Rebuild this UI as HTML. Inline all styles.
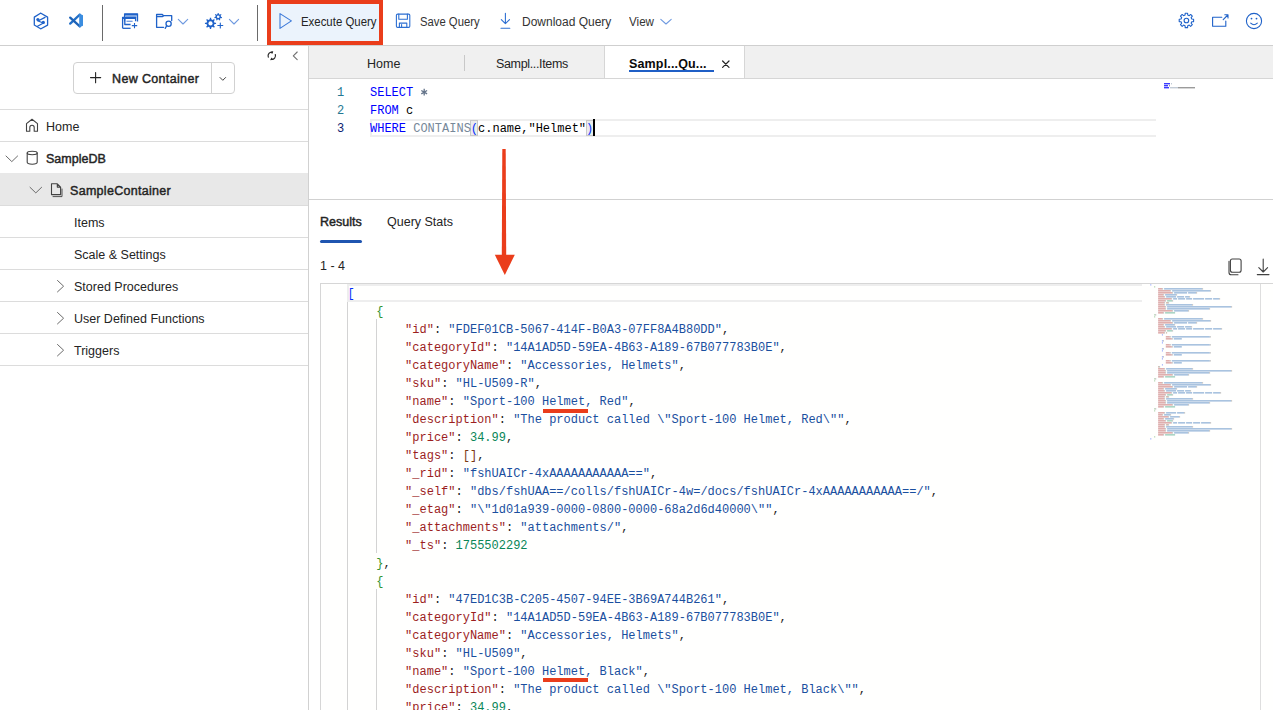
<!DOCTYPE html>
<html><head><meta charset="utf-8">
<style>
*{box-sizing:border-box}
html,body{margin:0;padding:0}
body{width:1273px;height:710px;overflow:hidden;position:relative;background:#fff;font-family:"Liberation Sans",sans-serif;color:#242424}
.a{position:absolute;white-space:pre}
.t{font-size:12.5px;line-height:16px}
.mono{font-family:"Liberation Mono",monospace;font-size:12px;line-height:18px}
svg{position:absolute;overflow:visible}
.hl{position:absolute;background:#e4e4e4}
.k{color:#9c1e1e}.s{color:#1a4f9f}.n{color:#098658}.p{color:#000}
.b1{color:#0431fa}.b2{color:#319331}.b3{color:#7b3814}
.kw{color:#0000ff}
.sb{-webkit-text-stroke:0.45px currentColor}
</style></head><body>

<!-- ============ TOP TOOLBAR ============ -->
<div class="a" style="left:0;top:45px;width:1273px;height:1px;background:#cfcfcf"></div>
<div class="a" style="left:102px;top:5px;width:1px;height:36px;background:#6a6a6a"></div>
<div class="a" style="left:257px;top:5px;width:1px;height:36px;background:#6a6a6a"></div>

<!-- Execute query highlighted -->
<div class="a" style="left:267px;top:0;width:116px;height:45px;background:#ea3d1b"></div>
<div class="a" style="left:271px;top:4px;width:108px;height:37px;background:#ebf3fc"></div>

<div id="toolbar-text">
<div class="a t" style="left:301px;top:14px;transform:scaleX(0.913);transform-origin:0 0;color:#242424">Execute Query</div>
<div class="a t" style="left:420px;top:14px;transform:scaleX(0.903);transform-origin:0 0;color:#333">Save Query</div>
<div class="a t" style="left:522px;top:14px;transform:scaleX(0.959);transform-origin:0 0;color:#333">Download Query</div>
<div class="a t" style="left:629px;top:14px;transform:scaleX(0.93);transform-origin:0 0;color:#333">View</div>
</div>

<!-- ============ SIDEBAR ============ -->
<div class="a" style="left:308px;top:46px;width:1px;height:664px;background:#d1d1d1"></div>

<!-- New container button -->
<div class="a" style="left:73px;top:62px;width:162px;height:32px;border:1px solid #d1d1d1;border-radius:4px;background:#fff"></div>
<div class="a" style="left:211px;top:63px;width:1px;height:30px;background:#d1d1d1"></div>
<div class="a t sb" style="left:112px;top:71px;letter-spacing:0.35px;color:#242424">New Container</div>

<div class="a" style="left:0;top:109px;width:308px;height:1px;background:#dcdcdc"></div>
<div class="a" style="left:0;top:141px;width:308px;height:1px;background:#dcdcdc"></div>
<div class="a" style="left:0;top:173px;width:308px;height:32px;background:#e8e8e8"></div>
<div class="a" style="left:0;top:205px;width:308px;height:1px;background:#dcdcdc"></div>
<div class="a" style="left:0;top:237px;width:308px;height:1px;background:#dcdcdc"></div>
<div class="a" style="left:0;top:269px;width:308px;height:1px;background:#dcdcdc"></div>
<div class="a" style="left:0;top:301px;width:308px;height:1px;background:#dcdcdc"></div>
<div class="a" style="left:0;top:333px;width:308px;height:1px;background:#dcdcdc"></div>
<div class="a" style="left:0;top:365px;width:308px;height:1px;background:#dcdcdc"></div>

<div class="a t" style="left:46px;top:119px">Home</div>
<div class="a t sb" style="left:46px;top:151px">SampleDB</div>
<div class="a t sb" style="left:70px;top:183px;letter-spacing:0.3px">SampleContainer</div>
<div class="a t" style="left:74px;top:215px">Items</div>
<div class="a t" style="left:74px;top:247px">Scale &amp; Settings</div>
<div class="a t" style="left:74px;top:279px">Stored Procedures</div>
<div class="a t" style="left:74px;top:311px">User Defined Functions</div>
<div class="a t" style="left:74px;top:343px">Triggers</div>

<!-- ============ TABS ============ -->
<div class="a" style="left:309px;top:46px;width:964px;height:32px;background:#f0f0f0"></div>
<div class="a" style="left:309px;top:78px;width:964px;height:1px;background:#d6d6d6"></div>
<div class="a" style="left:464px;top:55px;width:1px;height:16px;background:#c8c8c8"></div>
<div class="a" style="left:604px;top:46px;width:141px;height:32px;background:#fff;border-left:1px solid #d6d6d6;border-right:1px solid #d6d6d6"></div>
<div class="a t" style="left:367px;top:56px">Home</div>
<div class="a t" style="left:496px;top:56px;letter-spacing:-0.35px">Sampl...Items</div>
<div class="a t" style="left:629px;top:56px;font-weight:bold;letter-spacing:0.15px;color:#0a0a0a">Sampl...Qu...</div>
<div class="a" style="left:629px;top:70px;width:85px;height:2px;background:#1f5fc6"></div>

<!-- ============ QUERY EDITOR ============ -->
<div class="a" style="left:370px;top:119px;width:786px;height:18px;border:2px solid #eeeeee;border-right:none"></div>
<div class="a" style="left:470px;top:120px;width:8px;height:16px;background:#ececec;border:1px solid #c8c8c8"></div>
<div class="a" style="left:586px;top:120px;width:8px;height:16px;background:#ececec;border:1px solid #c8c8c8"></div>
<div class="a mono" style="left:337px;top:84px;color:#237893">1</div>
<div class="a mono" style="left:337px;top:102px;color:#237893">2</div>
<div class="a mono" style="left:337px;top:120px;color:#0b216f">3</div>
<div class="a mono" style="left:370px;top:84px"><span class="kw">SELECT</span>  </div>
<div class="a mono" style="left:370px;top:102px"><span class="kw">FROM</span> <span class="p">c</span></div>
<div class="a mono" style="left:370px;top:120px"><span class="kw">WHERE</span> <span style="color:#778899">CONTAINS</span><span class="b1">(</span><span class="p">c.name,"Helmet"</span><span class="b1">)</span></div>
<div class="a" style="left:593px;top:119px;width:2px;height:17px;background:#000"></div>

<div class="a" style="left:309px;top:199px;width:964px;height:1px;background:#d1d1d1"></div>

<!-- ============ RESULTS ============ -->
<div class="a t sb" style="left:320px;top:214px">Results</div>
<div class="a t" style="left:387px;top:214px">Query Stats</div>
<div class="a" style="left:320px;top:240px;width:42px;height:3px;border-radius:2px;background:#1f55b0"></div>
<div class="a t" style="left:320px;top:258px">1 - 4</div>

<div class="a" style="left:320px;top:283px;width:960px;height:430px;border:1px solid #d6d6d6;background:#fffffe"></div>
<div class="a" style="left:1260px;top:284px;width:1px;height:426px;background:#dedede"></div>
<div class="a" style="left:347px;top:284px;width:795px;height:18px;border:2px solid #eeeeee;border-right:none"></div>

<div class="a" style="left:347px;top:302px;width:1px;height:410px;background:#d3d3d3"></div>
<div class="a" style="left:376px;top:319px;width:1px;height:234px;background:#d3d3d3"></div>
<div class="a" style="left:376px;top:589px;width:1px;height:122px;background:#d3d3d3"></div>
<div id="json" class="a mono" style="left:347.5px;top:285px"><span class="b1">[</span>
    <span class="b2">{</span>
        <span class="k">"id"</span>: <span class="s">"FDEF01CB-5067-414F-B0A3-07FF8A4B80DD"</span>,
        <span class="k">"categoryId"</span>: <span class="s">"14A1AD5D-59EA-4B63-A189-67B077783B0E"</span>,
        <span class="k">"categoryName"</span>: <span class="s">"Accessories, Helmets"</span>,
        <span class="k">"sku"</span>: <span class="s">"HL-U509-R"</span>,
        <span class="k">"name"</span>: <span class="s">"Sport-100 Helmet, Red"</span>,
        <span class="k">"description"</span>: <span class="s">"The product called \"Sport-100 Helmet, Red\""</span>,
        <span class="k">"price"</span>: <span class="n">34.99</span>,
        <span class="k">"tags"</span>: <span class="b3">[]</span>,
        <span class="k">"_rid"</span>: <span class="s">"fshUAICr-4xAAAAAAAAAAA=="</span>,
        <span class="k">"_self"</span>: <span class="s">"dbs/fshUAA==/colls/fshUAICr-4w=/docs/fshUAICr-4xAAAAAAAAAAA==/"</span>,
        <span class="k">"_etag"</span>: <span class="s">"\"1d01a939-0000-0800-0000-68a2d6d40000\""</span>,
        <span class="k">"_attachments"</span>: <span class="s">"attachments/"</span>,
        <span class="k">"_ts"</span>: <span class="n">1755502292</span>
    <span class="b2">}</span>,
    <span class="b2">{</span>
        <span class="k">"id"</span>: <span class="s">"47ED1C3B-C205-4507-94EE-3B69A744B261"</span>,
        <span class="k">"categoryId"</span>: <span class="s">"14A1AD5D-59EA-4B63-A189-67B077783B0E"</span>,
        <span class="k">"categoryName"</span>: <span class="s">"Accessories, Helmets"</span>,
        <span class="k">"sku"</span>: <span class="s">"HL-U509"</span>,
        <span class="k">"name"</span>: <span class="s">"Sport-100 Helmet, Black"</span>,
        <span class="k">"description"</span>: <span class="s">"The product called \"Sport-100 Helmet, Black\""</span>,
        <span class="k">"price"</span>: <span class="n">34.99</span>,
</div>

<!-- red underlines -->
<div class="a" style="left:543px;top:409px;width:45px;height:4px;background:#ea3d1b"></div>
<div class="a" style="left:543px;top:678px;width:45px;height:4px;background:#ea3d1b"></div>

<!-- red arrow -->
<svg style="left:0;top:0" width="1273" height="710"><polygon points="502.3,149 505.7,149 506.2,256 501.8,256" fill="#ea3d1b"/><polygon points="494.8,254.8 514.8,254.8 504.8,275" fill="#ea3d1b"/></svg>


<!--MINIMAP-->
<svg style="left:0;top:0" width="1273" height="710" opacity="0.42"><rect x="1150.3" y="284.2" width="1.0" height="1.3" fill="#0431fa"/><rect x="1154.2" y="286.2" width="1.0" height="1.3" fill="#319331"/><rect x="1158.1" y="288.2" width="4.0" height="1.3" fill="#a31515"/><rect x="1162.1" y="288.2" width="1.0" height="1.3" fill="#555"/><rect x="1164.1" y="288.2" width="38.0" height="1.3" fill="#0451a5"/><rect x="1202.1" y="288.2" width="1.0" height="1.3" fill="#555"/><rect x="1158.1" y="290.2" width="12.0" height="1.3" fill="#a31515"/><rect x="1170.1" y="290.2" width="1.0" height="1.3" fill="#555"/><rect x="1172.1" y="290.2" width="38.0" height="1.3" fill="#0451a5"/><rect x="1210.1" y="290.2" width="1.0" height="1.3" fill="#555"/><rect x="1158.1" y="292.2" width="14.0" height="1.3" fill="#a31515"/><rect x="1172.1" y="292.2" width="1.0" height="1.3" fill="#555"/><rect x="1174.1" y="292.2" width="13.0" height="1.3" fill="#0451a5"/><rect x="1188.1" y="292.2" width="8.0" height="1.3" fill="#0451a5"/><rect x="1196.1" y="292.2" width="1.0" height="1.3" fill="#555"/><rect x="1158.1" y="294.2" width="5.0" height="1.3" fill="#a31515"/><rect x="1163.1" y="294.2" width="1.0" height="1.3" fill="#555"/><rect x="1165.1" y="294.2" width="11.0" height="1.3" fill="#0451a5"/><rect x="1176.1" y="294.2" width="1.0" height="1.3" fill="#555"/><rect x="1158.1" y="296.2" width="6.0" height="1.3" fill="#a31515"/><rect x="1164.1" y="296.2" width="1.0" height="1.3" fill="#555"/><rect x="1166.1" y="296.2" width="10.0" height="1.3" fill="#0451a5"/><rect x="1177.1" y="296.2" width="7.0" height="1.3" fill="#0451a5"/><rect x="1185.1" y="296.2" width="4.0" height="1.3" fill="#0451a5"/><rect x="1189.1" y="296.2" width="1.0" height="1.3" fill="#555"/><rect x="1158.1" y="298.2" width="13.0" height="1.3" fill="#a31515"/><rect x="1171.1" y="298.2" width="1.0" height="1.3" fill="#555"/><rect x="1173.1" y="298.2" width="4.0" height="1.3" fill="#0451a5"/><rect x="1178.1" y="298.2" width="7.0" height="1.3" fill="#0451a5"/><rect x="1186.1" y="298.2" width="6.0" height="1.3" fill="#0451a5"/><rect x="1193.1" y="298.2" width="11.0" height="1.3" fill="#0451a5"/><rect x="1205.1" y="298.2" width="7.0" height="1.3" fill="#0451a5"/><rect x="1213.1" y="298.2" width="6.0" height="1.3" fill="#0451a5"/><rect x="1219.1" y="298.2" width="1.0" height="1.3" fill="#555"/><rect x="1158.1" y="300.2" width="7.0" height="1.3" fill="#a31515"/><rect x="1165.1" y="300.2" width="1.0" height="1.3" fill="#555"/><rect x="1167.1" y="300.2" width="5.0" height="1.3" fill="#098658"/><rect x="1172.1" y="300.2" width="1.0" height="1.3" fill="#555"/><rect x="1158.1" y="302.2" width="6.0" height="1.3" fill="#a31515"/><rect x="1164.1" y="302.2" width="1.0" height="1.3" fill="#555"/><rect x="1166.1" y="302.2" width="2.0" height="1.3" fill="#7b3814"/><rect x="1168.1" y="302.2" width="1.0" height="1.3" fill="#555"/><rect x="1158.1" y="304.2" width="6.0" height="1.3" fill="#a31515"/><rect x="1164.1" y="304.2" width="1.0" height="1.3" fill="#555"/><rect x="1166.1" y="304.2" width="26.0" height="1.3" fill="#0451a5"/><rect x="1192.1" y="304.2" width="1.0" height="1.3" fill="#555"/><rect x="1158.1" y="306.2" width="7.0" height="1.3" fill="#a31515"/><rect x="1165.1" y="306.2" width="1.0" height="1.3" fill="#555"/><rect x="1167.1" y="306.2" width="64.0" height="1.3" fill="#0451a5"/><rect x="1231.1" y="306.2" width="1.0" height="1.3" fill="#555"/><rect x="1158.1" y="308.2" width="7.0" height="1.3" fill="#a31515"/><rect x="1165.1" y="308.2" width="1.0" height="1.3" fill="#555"/><rect x="1167.1" y="308.2" width="42.0" height="1.3" fill="#0451a5"/><rect x="1209.1" y="308.2" width="1.0" height="1.3" fill="#555"/><rect x="1158.1" y="310.2" width="14.0" height="1.3" fill="#a31515"/><rect x="1172.1" y="310.2" width="1.0" height="1.3" fill="#555"/><rect x="1174.1" y="310.2" width="14.0" height="1.3" fill="#0451a5"/><rect x="1188.1" y="310.2" width="1.0" height="1.3" fill="#555"/><rect x="1158.1" y="312.2" width="5.0" height="1.3" fill="#a31515"/><rect x="1163.1" y="312.2" width="1.0" height="1.3" fill="#555"/><rect x="1165.1" y="312.2" width="10.0" height="1.3" fill="#098658"/><rect x="1154.2" y="314.2" width="1.0" height="1.3" fill="#319331"/><rect x="1155.2" y="314.2" width="1.0" height="1.3" fill="#555"/><rect x="1154.2" y="316.2" width="1.0" height="1.3" fill="#319331"/><rect x="1158.1" y="318.2" width="4.0" height="1.3" fill="#a31515"/><rect x="1162.1" y="318.2" width="1.0" height="1.3" fill="#555"/><rect x="1164.1" y="318.2" width="38.0" height="1.3" fill="#0451a5"/><rect x="1202.1" y="318.2" width="1.0" height="1.3" fill="#555"/><rect x="1158.1" y="320.2" width="12.0" height="1.3" fill="#a31515"/><rect x="1170.1" y="320.2" width="1.0" height="1.3" fill="#555"/><rect x="1172.1" y="320.2" width="38.0" height="1.3" fill="#0451a5"/><rect x="1210.1" y="320.2" width="1.0" height="1.3" fill="#555"/><rect x="1158.1" y="322.2" width="14.0" height="1.3" fill="#a31515"/><rect x="1172.1" y="322.2" width="1.0" height="1.3" fill="#555"/><rect x="1174.1" y="322.2" width="13.0" height="1.3" fill="#0451a5"/><rect x="1188.1" y="322.2" width="8.0" height="1.3" fill="#0451a5"/><rect x="1196.1" y="322.2" width="1.0" height="1.3" fill="#555"/><rect x="1158.1" y="324.2" width="5.0" height="1.3" fill="#a31515"/><rect x="1163.1" y="324.2" width="1.0" height="1.3" fill="#555"/><rect x="1165.1" y="324.2" width="9.0" height="1.3" fill="#0451a5"/><rect x="1174.1" y="324.2" width="1.0" height="1.3" fill="#555"/><rect x="1158.1" y="326.2" width="6.0" height="1.3" fill="#a31515"/><rect x="1164.1" y="326.2" width="1.0" height="1.3" fill="#555"/><rect x="1166.1" y="326.2" width="10.0" height="1.3" fill="#0451a5"/><rect x="1177.1" y="326.2" width="7.0" height="1.3" fill="#0451a5"/><rect x="1185.1" y="326.2" width="6.0" height="1.3" fill="#0451a5"/><rect x="1191.1" y="326.2" width="1.0" height="1.3" fill="#555"/><rect x="1158.1" y="328.2" width="13.0" height="1.3" fill="#a31515"/><rect x="1171.1" y="328.2" width="1.0" height="1.3" fill="#555"/><rect x="1173.1" y="328.2" width="4.0" height="1.3" fill="#0451a5"/><rect x="1178.1" y="328.2" width="7.0" height="1.3" fill="#0451a5"/><rect x="1186.1" y="328.2" width="6.0" height="1.3" fill="#0451a5"/><rect x="1193.1" y="328.2" width="11.0" height="1.3" fill="#0451a5"/><rect x="1205.1" y="328.2" width="7.0" height="1.3" fill="#0451a5"/><rect x="1213.1" y="328.2" width="8.0" height="1.3" fill="#0451a5"/><rect x="1221.1" y="328.2" width="1.0" height="1.3" fill="#555"/><rect x="1158.1" y="330.2" width="7.0" height="1.3" fill="#a31515"/><rect x="1165.1" y="330.2" width="1.0" height="1.3" fill="#555"/><rect x="1167.1" y="330.2" width="5.0" height="1.3" fill="#098658"/><rect x="1172.1" y="330.2" width="1.0" height="1.3" fill="#555"/><rect x="1158.1" y="332.2" width="6.0" height="1.3" fill="#a31515"/><rect x="1164.1" y="332.2" width="1.0" height="1.3" fill="#555"/><rect x="1166.1" y="332.2" width="1.0" height="1.3" fill="#7b3814"/><rect x="1161.9" y="334.2" width="1.0" height="1.3" fill="#0431fa"/><rect x="1165.8" y="336.2" width="4.0" height="1.3" fill="#a31515"/><rect x="1169.8" y="336.2" width="1.0" height="1.3" fill="#555"/><rect x="1171.8" y="336.2" width="38.0" height="1.3" fill="#0451a5"/><rect x="1209.8" y="336.2" width="1.0" height="1.3" fill="#555"/><rect x="1165.8" y="338.2" width="6.0" height="1.3" fill="#a31515"/><rect x="1171.8" y="338.2" width="1.0" height="1.3" fill="#555"/><rect x="1173.8" y="338.2" width="8.0" height="1.3" fill="#0451a5"/><rect x="1161.9" y="340.2" width="1.0" height="1.3" fill="#0431fa"/><rect x="1162.9" y="340.2" width="1.0" height="1.3" fill="#555"/><rect x="1161.9" y="342.2" width="1.0" height="1.3" fill="#0431fa"/><rect x="1165.8" y="344.2" width="4.0" height="1.3" fill="#a31515"/><rect x="1169.8" y="344.2" width="1.0" height="1.3" fill="#555"/><rect x="1171.8" y="344.2" width="38.0" height="1.3" fill="#0451a5"/><rect x="1209.8" y="344.2" width="1.0" height="1.3" fill="#555"/><rect x="1165.8" y="346.2" width="6.0" height="1.3" fill="#a31515"/><rect x="1171.8" y="346.2" width="1.0" height="1.3" fill="#555"/><rect x="1173.8" y="346.2" width="8.0" height="1.3" fill="#0451a5"/><rect x="1161.9" y="348.2" width="1.0" height="1.3" fill="#0431fa"/><rect x="1162.9" y="348.2" width="1.0" height="1.3" fill="#555"/><rect x="1161.9" y="350.2" width="1.0" height="1.3" fill="#0431fa"/><rect x="1165.8" y="352.2" width="4.0" height="1.3" fill="#a31515"/><rect x="1169.8" y="352.2" width="1.0" height="1.3" fill="#555"/><rect x="1171.8" y="352.2" width="38.0" height="1.3" fill="#0451a5"/><rect x="1209.8" y="352.2" width="1.0" height="1.3" fill="#555"/><rect x="1165.8" y="354.2" width="6.0" height="1.3" fill="#a31515"/><rect x="1171.8" y="354.2" width="1.0" height="1.3" fill="#555"/><rect x="1173.8" y="354.2" width="8.0" height="1.3" fill="#0451a5"/><rect x="1161.9" y="356.2" width="1.0" height="1.3" fill="#0431fa"/><rect x="1162.9" y="356.2" width="1.0" height="1.3" fill="#555"/><rect x="1161.9" y="358.2" width="1.0" height="1.3" fill="#0431fa"/><rect x="1165.8" y="360.2" width="4.0" height="1.3" fill="#a31515"/><rect x="1169.8" y="360.2" width="1.0" height="1.3" fill="#555"/><rect x="1171.8" y="360.2" width="38.0" height="1.3" fill="#0451a5"/><rect x="1209.8" y="360.2" width="1.0" height="1.3" fill="#555"/><rect x="1165.8" y="362.2" width="6.0" height="1.3" fill="#a31515"/><rect x="1171.8" y="362.2" width="1.0" height="1.3" fill="#555"/><rect x="1173.8" y="362.2" width="8.0" height="1.3" fill="#0451a5"/><rect x="1161.9" y="364.2" width="1.0" height="1.3" fill="#0431fa"/><rect x="1158.1" y="366.2" width="1.0" height="1.3" fill="#7b3814"/><rect x="1159.1" y="366.2" width="1.0" height="1.3" fill="#555"/><rect x="1158.1" y="368.2" width="6.0" height="1.3" fill="#a31515"/><rect x="1164.1" y="368.2" width="1.0" height="1.3" fill="#555"/><rect x="1166.1" y="368.2" width="26.0" height="1.3" fill="#0451a5"/><rect x="1192.1" y="368.2" width="1.0" height="1.3" fill="#555"/><rect x="1158.1" y="370.2" width="7.0" height="1.3" fill="#a31515"/><rect x="1165.1" y="370.2" width="1.0" height="1.3" fill="#555"/><rect x="1167.1" y="370.2" width="64.0" height="1.3" fill="#0451a5"/><rect x="1231.1" y="370.2" width="1.0" height="1.3" fill="#555"/><rect x="1158.1" y="372.2" width="7.0" height="1.3" fill="#a31515"/><rect x="1165.1" y="372.2" width="1.0" height="1.3" fill="#555"/><rect x="1167.1" y="372.2" width="42.0" height="1.3" fill="#0451a5"/><rect x="1209.1" y="372.2" width="1.0" height="1.3" fill="#555"/><rect x="1158.1" y="374.2" width="14.0" height="1.3" fill="#a31515"/><rect x="1172.1" y="374.2" width="1.0" height="1.3" fill="#555"/><rect x="1174.1" y="374.2" width="14.0" height="1.3" fill="#0451a5"/><rect x="1188.1" y="374.2" width="1.0" height="1.3" fill="#555"/><rect x="1158.1" y="376.2" width="5.0" height="1.3" fill="#a31515"/><rect x="1163.1" y="376.2" width="1.0" height="1.3" fill="#555"/><rect x="1165.1" y="376.2" width="10.0" height="1.3" fill="#098658"/><rect x="1154.2" y="378.2" width="1.0" height="1.3" fill="#319331"/><rect x="1155.2" y="378.2" width="1.0" height="1.3" fill="#555"/><rect x="1154.2" y="380.2" width="1.0" height="1.3" fill="#319331"/><rect x="1158.1" y="382.2" width="4.0" height="1.3" fill="#a31515"/><rect x="1162.1" y="382.2" width="1.0" height="1.3" fill="#555"/><rect x="1164.1" y="382.2" width="38.0" height="1.3" fill="#0451a5"/><rect x="1202.1" y="382.2" width="1.0" height="1.3" fill="#555"/><rect x="1158.1" y="384.2" width="12.0" height="1.3" fill="#a31515"/><rect x="1170.1" y="384.2" width="1.0" height="1.3" fill="#555"/><rect x="1172.1" y="384.2" width="38.0" height="1.3" fill="#0451a5"/><rect x="1210.1" y="384.2" width="1.0" height="1.3" fill="#555"/><rect x="1158.1" y="386.2" width="14.0" height="1.3" fill="#a31515"/><rect x="1172.1" y="386.2" width="1.0" height="1.3" fill="#555"/><rect x="1174.1" y="386.2" width="13.0" height="1.3" fill="#0451a5"/><rect x="1188.1" y="386.2" width="8.0" height="1.3" fill="#0451a5"/><rect x="1196.1" y="386.2" width="1.0" height="1.3" fill="#555"/><rect x="1158.1" y="388.2" width="5.0" height="1.3" fill="#a31515"/><rect x="1163.1" y="388.2" width="1.0" height="1.3" fill="#555"/><rect x="1165.1" y="388.2" width="11.0" height="1.3" fill="#0451a5"/><rect x="1176.1" y="388.2" width="1.0" height="1.3" fill="#555"/><rect x="1158.1" y="390.2" width="6.0" height="1.3" fill="#a31515"/><rect x="1164.1" y="390.2" width="1.0" height="1.3" fill="#555"/><rect x="1166.1" y="390.2" width="10.0" height="1.3" fill="#0451a5"/><rect x="1177.1" y="390.2" width="7.0" height="1.3" fill="#0451a5"/><rect x="1185.1" y="390.2" width="5.0" height="1.3" fill="#0451a5"/><rect x="1190.1" y="390.2" width="1.0" height="1.3" fill="#555"/><rect x="1158.1" y="392.2" width="13.0" height="1.3" fill="#a31515"/><rect x="1171.1" y="392.2" width="1.0" height="1.3" fill="#555"/><rect x="1173.1" y="392.2" width="4.0" height="1.3" fill="#0451a5"/><rect x="1178.1" y="392.2" width="7.0" height="1.3" fill="#0451a5"/><rect x="1186.1" y="392.2" width="6.0" height="1.3" fill="#0451a5"/><rect x="1193.1" y="392.2" width="11.0" height="1.3" fill="#0451a5"/><rect x="1205.1" y="392.2" width="7.0" height="1.3" fill="#0451a5"/><rect x="1213.1" y="392.2" width="7.0" height="1.3" fill="#0451a5"/><rect x="1220.1" y="392.2" width="1.0" height="1.3" fill="#555"/><rect x="1158.1" y="394.2" width="7.0" height="1.3" fill="#a31515"/><rect x="1165.1" y="394.2" width="1.0" height="1.3" fill="#555"/><rect x="1167.1" y="394.2" width="5.0" height="1.3" fill="#098658"/><rect x="1172.1" y="394.2" width="1.0" height="1.3" fill="#555"/><rect x="1158.1" y="396.2" width="6.0" height="1.3" fill="#a31515"/><rect x="1164.1" y="396.2" width="1.0" height="1.3" fill="#555"/><rect x="1166.1" y="396.2" width="2.0" height="1.3" fill="#7b3814"/><rect x="1168.1" y="396.2" width="1.0" height="1.3" fill="#555"/><rect x="1158.1" y="398.2" width="6.0" height="1.3" fill="#a31515"/><rect x="1164.1" y="398.2" width="1.0" height="1.3" fill="#555"/><rect x="1166.1" y="398.2" width="26.0" height="1.3" fill="#0451a5"/><rect x="1192.1" y="398.2" width="1.0" height="1.3" fill="#555"/><rect x="1158.1" y="400.2" width="7.0" height="1.3" fill="#a31515"/><rect x="1165.1" y="400.2" width="1.0" height="1.3" fill="#555"/><rect x="1167.1" y="400.2" width="64.0" height="1.3" fill="#0451a5"/><rect x="1231.1" y="400.2" width="1.0" height="1.3" fill="#555"/><rect x="1158.1" y="402.2" width="7.0" height="1.3" fill="#a31515"/><rect x="1165.1" y="402.2" width="1.0" height="1.3" fill="#555"/><rect x="1167.1" y="402.2" width="42.0" height="1.3" fill="#0451a5"/><rect x="1209.1" y="402.2" width="1.0" height="1.3" fill="#555"/><rect x="1158.1" y="404.2" width="14.0" height="1.3" fill="#a31515"/><rect x="1172.1" y="404.2" width="1.0" height="1.3" fill="#555"/><rect x="1174.1" y="404.2" width="14.0" height="1.3" fill="#0451a5"/><rect x="1188.1" y="404.2" width="1.0" height="1.3" fill="#555"/><rect x="1158.1" y="406.2" width="5.0" height="1.3" fill="#a31515"/><rect x="1163.1" y="406.2" width="1.0" height="1.3" fill="#555"/><rect x="1165.1" y="406.2" width="10.0" height="1.3" fill="#098658"/><rect x="1154.2" y="408.2" width="1.0" height="1.3" fill="#319331"/><rect x="1155.2" y="408.2" width="1.0" height="1.3" fill="#555"/><rect x="1154.2" y="410.2" width="1.0" height="1.3" fill="#319331"/><rect x="1158.1" y="412.2" width="6.0" height="1.3" fill="#a31515"/><rect x="1164.1" y="412.2" width="1.0" height="1.3" fill="#555"/><rect x="1166.1" y="412.2" width="10.0" height="1.3" fill="#0451a5"/><rect x="1177.1" y="412.2" width="7.0" height="1.3" fill="#0451a5"/><rect x="1184.1" y="412.2" width="1.0" height="1.3" fill="#555"/><rect x="1158.1" y="414.2" width="4.0" height="1.3" fill="#a31515"/><rect x="1162.1" y="414.2" width="1.0" height="1.3" fill="#555"/><rect x="1164.1" y="414.2" width="6.0" height="1.3" fill="#0451a5"/><rect x="1170.1" y="414.2" width="1.0" height="1.3" fill="#555"/><rect x="1158.1" y="416.2" width="10.0" height="1.3" fill="#a31515"/><rect x="1168.1" y="416.2" width="1.0" height="1.3" fill="#555"/><rect x="1170.1" y="416.2" width="9.0" height="1.3" fill="#0451a5"/><rect x="1179.1" y="416.2" width="1.0" height="1.3" fill="#555"/><rect x="1158.1" y="418.2" width="5.0" height="1.3" fill="#a31515"/><rect x="1163.1" y="418.2" width="1.0" height="1.3" fill="#555"/><rect x="1165.1" y="418.2" width="8.0" height="1.3" fill="#0451a5"/><rect x="1173.1" y="418.2" width="1.0" height="1.3" fill="#555"/><rect x="1158.1" y="420.2" width="7.0" height="1.3" fill="#a31515"/><rect x="1165.1" y="420.2" width="1.0" height="1.3" fill="#555"/><rect x="1167.1" y="420.2" width="5.0" height="1.3" fill="#098658"/><rect x="1172.1" y="420.2" width="1.0" height="1.3" fill="#555"/><rect x="1158.1" y="422.2" width="13.0" height="1.3" fill="#a31515"/><rect x="1171.1" y="422.2" width="1.0" height="1.3" fill="#555"/><rect x="1173.1" y="422.2" width="4.0" height="1.3" fill="#0451a5"/><rect x="1178.1" y="422.2" width="7.0" height="1.3" fill="#0451a5"/><rect x="1186.1" y="422.2" width="6.0" height="1.3" fill="#0451a5"/><rect x="1193.1" y="422.2" width="7.0" height="1.3" fill="#0451a5"/><rect x="1201.1" y="422.2" width="9.0" height="1.3" fill="#0451a5"/><rect x="1210.1" y="422.2" width="1.0" height="1.3" fill="#555"/><rect x="1158.1" y="424.2" width="6.0" height="1.3" fill="#a31515"/><rect x="1164.1" y="424.2" width="1.0" height="1.3" fill="#555"/><rect x="1166.1" y="424.2" width="2.0" height="1.3" fill="#7b3814"/><rect x="1168.1" y="424.2" width="1.0" height="1.3" fill="#555"/><rect x="1158.1" y="426.2" width="6.0" height="1.3" fill="#a31515"/><rect x="1164.1" y="426.2" width="1.0" height="1.3" fill="#555"/><rect x="1166.1" y="426.2" width="26.0" height="1.3" fill="#0451a5"/><rect x="1192.1" y="426.2" width="1.0" height="1.3" fill="#555"/><rect x="1158.1" y="428.2" width="7.0" height="1.3" fill="#a31515"/><rect x="1165.1" y="428.2" width="1.0" height="1.3" fill="#555"/><rect x="1167.1" y="428.2" width="64.0" height="1.3" fill="#0451a5"/><rect x="1231.1" y="428.2" width="1.0" height="1.3" fill="#555"/><rect x="1158.1" y="430.2" width="7.0" height="1.3" fill="#a31515"/><rect x="1165.1" y="430.2" width="1.0" height="1.3" fill="#555"/><rect x="1167.1" y="430.2" width="42.0" height="1.3" fill="#0451a5"/><rect x="1209.1" y="430.2" width="1.0" height="1.3" fill="#555"/><rect x="1158.1" y="432.2" width="14.0" height="1.3" fill="#a31515"/><rect x="1172.1" y="432.2" width="1.0" height="1.3" fill="#555"/><rect x="1174.1" y="432.2" width="14.0" height="1.3" fill="#0451a5"/><rect x="1188.1" y="432.2" width="1.0" height="1.3" fill="#555"/><rect x="1158.1" y="434.2" width="5.0" height="1.3" fill="#a31515"/><rect x="1163.1" y="434.2" width="1.0" height="1.3" fill="#555"/><rect x="1165.1" y="434.2" width="10.0" height="1.3" fill="#098658"/><rect x="1154.2" y="436.2" width="1.0" height="1.3" fill="#319331"/><rect x="1150.3" y="438.2" width="1.0" height="1.3" fill="#0431fa"/></svg>
<svg style="left:0;top:0" width="1273" height="710" opacity="0.85"><rect x="1164.0" y="83.0" width="6.0" height="1.4" fill="#1a1aff"/><rect x="1171.0" y="83.0" width="1.0" height="1.4" fill="#b8c2d0"/><rect x="1164.0" y="85.0" width="4.0" height="1.4" fill="#1a1aff"/><rect x="1169.0" y="85.0" width="1.0" height="1.4" fill="#8a8a8a"/><rect x="1164.0" y="87.0" width="5.0" height="1.4" fill="#1a1aff"/><rect x="1170.0" y="87.0" width="8.0" height="1.4" fill="#b8c2d0"/><rect x="1178.0" y="87.0" width="1.0" height="1.4" fill="#8a8a8a"/><rect x="1179.0" y="87.0" width="15.0" height="1.4" fill="#8a8a8a"/><rect x="1194.0" y="87.0" width="1.0" height="1.4" fill="#8a8a8a"/></svg>
<!--/MINIMAP-->
<!-- ============ ICONS OVERLAY ============ -->
<svg style="left:0;top:0" width="1273" height="710" fill="none" stroke-linecap="round" stroke-linejoin="round">
 <g stroke="#1f62c9" stroke-width="1.3">
  <!-- hex icon -->
  <path d="M40.9 13.2 L47.6 17.1 M47.6 17.6 V24.6 M47.6 25.1 L41 28.7 M40.6 28.7 L34.3 25 M34.3 24.6 V17.5 M34.3 17.1 L40.5 13.2"/>
  <path d="M45 17.4 L38 21 L43.5 23 L37.5 26.3"/>
 </g>
 <circle cx="37.9" cy="19.6" r="1.6" fill="#1f62c9"/>
 <circle cx="43.3" cy="22.4" r="1.6" fill="#1f62c9"/>
 <!-- vscode icon -->
 <path d="M70.2 23.6 L79.8 14.6" stroke="#2470c8" stroke-width="2.3" stroke-linecap="round"/>
 <path d="M70.2 17.6 L79.8 26.4" stroke="#1d63b8" stroke-width="2.3" stroke-linecap="round"/>
 <path d="M79.2 13.4 L83 15.3 V25.7 L79.2 27.6 Z" fill="#3b8de0"/>
 <!-- new container -->
 <g stroke="#1f62c9" stroke-width="1.3" stroke-linecap="butt">
  <path d="M124.6 21.6 V13.8 H137.5 V21.6"/>
  <path d="M124.6 14.8 H137.5" stroke-width="2"/>
  <rect x="125.3" y="15.4" width="11.6" height="2.4" fill="#9dbbe8" stroke="none"/>
  <path d="M122.6 28.3 V17.5 H135.6 V21.3"/>
  <path d="M122.6 18.2 H135.6" stroke-width="1.6"/>
  <path d="M124.8 18.8 V24.5 H130.6"/>
  <path d="M122.6 28.3 H130.6"/>
  <path d="M126.5 21.3 H132.6" stroke="#6f9ae0"/>
  <path d="M131.8 25.6 H137.2 M134.5 22.9 V28.3" stroke-width="1.1"/>
 </g>
 <!-- folder search -->
 <g stroke="#1f62c9" stroke-width="1.3">
  <path d="M163.6 27.3 H156.6 V14.5 H162.3 L163.6 15.7 H171.7 V20.6"/>
  <path d="M156.6 16.6 H162.3 L163.6 15.7"/>
  <circle cx="168.6" cy="23.8" r="2.6"/>
  <path d="M166.8 25.7 L165.2 28.3"/>
 </g>
 <!-- chevrons toolbar -->
 <g stroke="#6f9ae0" stroke-width="1.1">
  <path d="M178.3 19.3 L183 24 L187.7 19.3"/>
  <path d="M229.4 19.3 L234 24 L238.6 19.3"/>
  <path d="M660.8 19.3 L666 24 L671.2 19.3"/>
 </g>
 <!-- gears -->
 <path d="M209.78 19.36 L209.84 17.84 L211.16 17.84 L211.22 19.36 L212.84 20.04 L213.97 19.00 L214.90 19.93 L213.86 21.06 L214.54 22.68 L216.06 22.74 L216.06 24.06 L214.54 24.12 L213.86 25.74 L214.90 26.87 L213.97 27.80 L212.84 26.76 L211.22 27.44 L211.16 28.96 L209.84 28.96 L209.78 27.44 L208.16 26.76 L207.03 27.80 L206.10 26.87 L207.14 25.74 L206.46 24.12 L204.94 24.06 L204.94 22.74 L206.46 22.68 L207.14 21.06 L206.10 19.93 L207.03 19.00 L208.16 20.04 Z" fill="#1f62c9"/>
 <path d="M217.64 14.06 L217.68 12.94 L218.72 12.94 L218.76 14.06 L219.99 14.65 L220.90 13.98 L221.55 14.80 L220.69 15.53 L221.00 16.86 L222.08 17.15 L221.85 18.17 L220.75 17.96 L219.90 19.03 L220.35 20.05 L219.41 20.51 L218.88 19.52 L217.52 19.52 L216.99 20.51 L216.05 20.05 L216.50 19.03 L215.65 17.96 L214.55 18.17 L214.32 17.15 L215.40 16.86 L215.71 15.53 L214.85 14.80 L215.50 13.98 L216.41 14.65 Z" fill="#1f62c9"/>
 <circle cx="210.5" cy="23.4" r="2.1" fill="#fff"/>
 <circle cx="218.2" cy="16.8" r="1.3" fill="#fff"/>
 <path d="M217.8 25.5 H222.8 M220.3 23 V28" stroke="#1f62c9" stroke-width="1.1"/>
 <!-- play -->
 <path d="M280 13.6 L291.4 20.9 L280 28.4 Z" stroke="#3a78d8" stroke-width="1.1"/>
 <!-- save -->
 <g stroke="#2d6fd2" stroke-width="1.1">
  <rect x="396.4" y="14.1" width="13.4" height="13.3" rx="1.2"/>
  <path d="M398.8 14.1 V19.2 H407.4 V14.1"/>
  <path d="M399.4 27.4 V23.1 H406.8 V27.4 M401.6 24.6 V27.4"/>
 </g>
 <!-- download -->
 <g stroke="#2d6fd2" stroke-width="1.1">
  <path d="M505.4 13.2 V23.6 M501.3 19.6 L505.4 23.7 L509.5 19.6"/>
  <path d="M501 28.2 H509.8"/>
 </g>
 <!-- right toolbar: settings gear -->
 <g stroke="#1f62c9" stroke-width="1.1">
  <path d="M1185.07 15.06 L1185.20 13.20 L1187.60 13.20 L1187.73 15.06 L1189.24 15.69 L1190.64 14.46 L1192.34 16.16 L1191.11 17.56 L1191.74 19.07 L1193.60 19.20 L1193.60 21.60 L1191.74 21.73 L1191.11 23.24 L1192.34 24.64 L1190.64 26.34 L1189.24 25.11 L1187.73 25.74 L1187.60 27.60 L1185.20 27.60 L1185.07 25.74 L1183.56 25.11 L1182.16 26.34 L1180.46 24.64 L1181.69 23.24 L1181.06 21.73 L1179.20 21.60 L1179.20 19.20 L1181.06 19.07 L1181.69 17.56 L1180.46 16.16 L1182.16 14.46 L1183.56 15.69 Z"/>
  <circle cx="1186.4" cy="20.5" r="2.3"/>
  <!-- open in new -->
  <path d="M1221.8 17.3 H1212.6 V26.2 H1225.8 V21.1"/>
  <path d="M1223.2 19.6 L1227.8 15 M1224.8 14.8 H1228 V18"/>
  <!-- smiley -->
  <circle cx="1254" cy="21" r="7.6"/>
  <path d="M1250.7 23.2 Q1254 26.3 1257.3 23.2"/>
 </g>
 <circle cx="1251.5" cy="18.6" r="0.9" fill="#1f62c9"/>
 <circle cx="1256.5" cy="18.6" r="0.9" fill="#1f62c9"/>

 <!-- sidebar icons -->
 <g stroke="#424242" stroke-width="1.1">
  <!-- refresh -->
  <path d="M272.4 52.2 A3.7 3.7 0 0 0 268.3 57.1" stroke="#2a2a2a" stroke-width="1.2"/>
  <path d="M271.2 59.4 A3.7 3.7 0 0 0 275.3 54.5" stroke="#2a2a2a" stroke-width="1.2"/>
  <path d="M270.2 51.9 L273.3 51.3 L272.2 54 Z M273.4 59.7 L270.3 60.3 L271.4 57.6 Z" fill="#2a2a2a" stroke="none"/>
  <!-- collapse chevron -->
  <path d="M297.2 52 L293.3 55.8 L297.2 59.6" stroke="#707070" stroke-width="1.1"/>
  <!-- plus -->
  <path d="M90.5 77.6 H100.7 M95.6 72.5 V82.7" stroke="#242424" stroke-width="1.1"/>
  <!-- home -->
  <path d="M26.5 131.2 V123.6 L32 119.2 L37.5 123.6 V131.2 H34.2 V127.5 A2.2 2.2 0 0 0 29.8 127.5 V131.2 Z"/>
  <!-- db -->
  <ellipse cx="32.2" cy="153" rx="5" ry="1.7"/>
  <path d="M27.2 153 V162.3 A5 1.9 0 0 0 37.2 162.3 V153"/>
  <!-- doc -->
  <path d="M51.5 183.8 H57.3 L60.6 187.1 V194.6 H51.5 Z M57.3 183.8 V187.1 H60.6"/>
  <path d="M53 196.6 H62 V189" stroke-width="0.9"/>
 </g>
 <g stroke="#6b6b6b" stroke-width="1">
  <path d="M220 77.5 L222.8 80.3 L225.6 77.5" stroke="#424242"/>
  <path d="M6 156 L11.8 161.6 L17.6 156"/>
  <path d="M30 187.3 L35.8 192.9 L41.6 187.3"/>
  <path d="M57.5 280.5 L63.6 286.2 L57.5 291.9"/>
  <path d="M57.5 312.5 L63.6 318.2 L57.5 323.9"/>
  <path d="M57.5 344.5 L63.6 350.2 L57.5 355.9"/>
 </g>
 <!-- asterisk -->
 <path d="M424.2 88.8 V95.6 M421.3 90.5 L427.1 93.9 M421.3 93.9 L427.1 90.5" stroke="#64748a" stroke-width="1.3" stroke-linecap="butt"/>
 <!-- tab close -->
 <path d="M722.6 61 L729 67.4 M729 61 L722.6 67.4" stroke="#242424" stroke-width="1.2"/>
 <!-- copy / download results -->
 <g stroke="#424242" stroke-width="1.1">
  <rect x="1230.4" y="259" width="10.7" height="13.3" rx="2"/>
  <path d="M1229 261.2 V272.5 A2.3 2.3 0 0 0 1231.3 274.8 H1238"/>
  <path d="M1263.2 259 V272 M1258.8 267.6 L1263.2 272 L1267.6 267.6 M1257.3 274.6 H1269"/>
 </g>
</svg>

</body></html>
